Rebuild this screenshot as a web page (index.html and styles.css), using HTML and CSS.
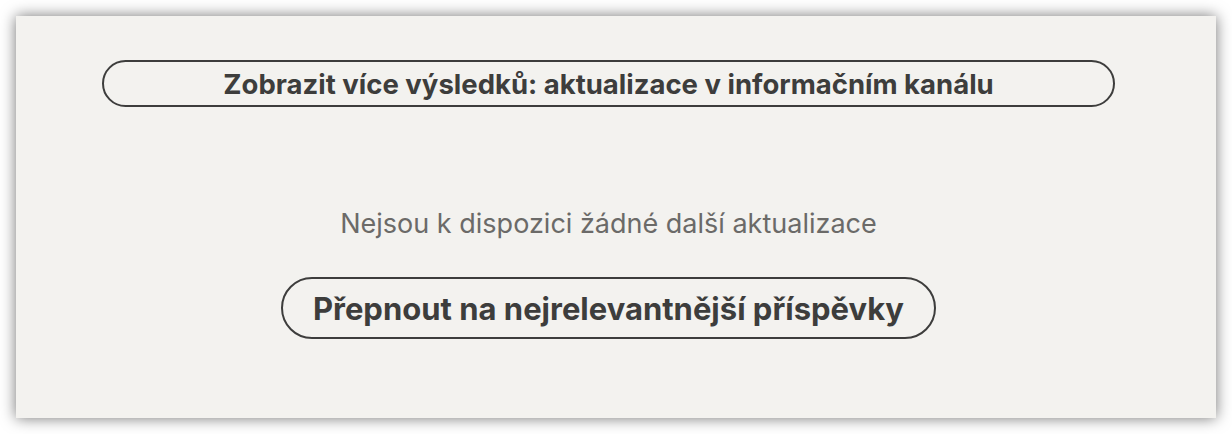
FILE: index.html
```html
<!DOCTYPE html>
<html lang="cs">
<head>
<meta charset="utf-8">
<link rel="stylesheet" href="styles.css">
</head>
<body>
  <div class="panel">
    <button class="more-btn">Zobrazit více výsledků: aktualizace v informačním kanálu</button>
    <div class="empty">
      <p class="empty-text">Nejsou k dispozici žádné další aktualizace</p>
      <button class="switch-btn">Přepnout na nejrelevantnější příspěvky</button>
    </div>
  </div>
</body>
</html>
```
FILE: styles.css
```css
html, body {
  margin: 0;
  padding: 0;
  background: #ffffff;
}
body {
  width: 1232px;
  height: 434px;
  padding: 16px;
  box-sizing: border-box;
  font-family: Inter, "Noto Sans", sans-serif;
}
.panel {
  width: 1200px;
  height: 402px;
  box-sizing: border-box;
  background: #f3f2ef;
  box-shadow: 0 0 14px rgba(0, 0, 0, 0.55);
  padding: 44px 101px 0 86px;
  display: flex;
  flex-direction: column;
  align-items: center;
}
.more-btn {
  width: 100%;
  height: 47px;
  box-sizing: border-box;
  border: 2px solid #3d3d3c;
  border-radius: 24px;
  background: transparent;
  font-family: inherit;
  font-weight: 700;
  font-size: 27.5px;
  color: #3d3d3c;
  padding: 0;
}
.empty {
  display: flex;
  flex-direction: column;
  align-items: center;
  margin-top: 101px;
}
.empty-text {
  margin: 0;
  font-size: 27px;
  line-height: 32px;
  color: #6b6a68;
}
.switch-btn {
  margin-top: 37px;
  height: 62px;
  box-sizing: border-box;
  border: 2px solid #3d3d3c;
  border-radius: 31px;
  background: transparent;
  font-family: inherit;
  font-weight: 700;
  font-size: 31px;
  color: #3d3d3c;
  padding: 0 30px;
}
```
